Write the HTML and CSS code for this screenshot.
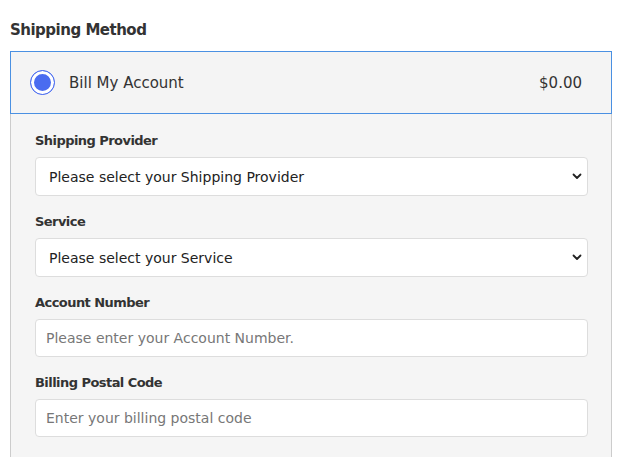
FILE: index.html
```html
<!DOCTYPE html>
<html>
    <head>
        <title>Shipping Method</title>
        <meta name="viewport" content="width=device-width, user-scalable=no">
        <link rel="stylesheet" href="styles.css">
    </head>
    <body>
        <h2 class="section_title">Shipping Method</h2>
        <div class="method_box">
            <label class="method_head">
                <span class="radio_dot"></span>
                <span class="method_name">Bill My Account</span>
                <span class="method_price">$0.00</span>
            </label>
            <div class="method_body">
                <div class="field">
                    <label class="field_label">Shipping Provider</label>
                    <div class="select_wrap">
                        <select class="field_select">
                            <option>Please select your Shipping Provider</option>
                        </select>
                        <svg class="chevron" width="10" height="7" viewBox="0 0 10 7"><path d="M1.5 1.5 L5 5 L8.5 1.5" fill="none" stroke="#222" stroke-width="1.8" stroke-linecap="round" stroke-linejoin="round"/></svg>
                    </div>
                </div>
                <div class="field">
                    <label class="field_label">Service</label>
                    <div class="select_wrap">
                        <select class="field_select">
                            <option>Please select your Service</option>
                        </select>
                        <svg class="chevron" width="10" height="7" viewBox="0 0 10 7"><path d="M1.5 1.5 L5 5 L8.5 1.5" fill="none" stroke="#222" stroke-width="1.8" stroke-linecap="round" stroke-linejoin="round"/></svg>
                    </div>
                </div>
                <div class="field">
                    <label class="field_label">Account Number</label>
                    <input class="field_input" type="text" placeholder="Please enter your Account Number.">
                </div>
                <div class="field">
                    <label class="field_label">Billing Postal Code</label>
                    <input class="field_input" type="text" placeholder="Enter your billing postal code">
                </div>
            </div>
        </div>
    </body>
</html>
```

FILE: styles.css
```css
body {
	margin: 0;
	padding: 20px 8px 0 10px;
	font-family: "DejaVu Sans", "Open Sans", sans-serif;
	color: #333;
	background: #fff;
}
.section_title {
	font-size: 15px;
	line-height: 20px;
	font-weight: bold;
	letter-spacing: -0.5px;
	margin: 0 0 11px 0;
	color: #333;
}
.method_box {
	width: 602px;
}
.method_head {
	display: flex;
	align-items: center;
	height: 61px;
	padding: 0 29px 0 19px;
	border: 1px solid #4a90e2;
	background: #f4f4f4;
	font-size: 15px;
}
.radio_dot {
	width: 23px;
	height: 23px;
	border-radius: 50%;
	border: 1px solid #4a6cf0;
	background: #4a6cf0;
	box-shadow: inset 0 0 0 3px #fff;
	margin-right: 14px;
}
.method_name {
	flex: 1;
}
.method_body {
	display: flex;
	flex-direction: column;
	gap: 18px;
	padding: 19px 23px 20px 24px;
	border-left: 1px solid #ccc;
	border-right: 1px solid #ccc;
	background: #f5f5f5;
}
.field {
	display: flex;
	flex-direction: column;
	gap: 8px;
}
.field_label {
	font-size: 13px;
	line-height: 16px;
	font-weight: bold;
	letter-spacing: -0.55px;
	color: #333;
}
.select_wrap {
	position: relative;
}
.field_select {
	appearance: none;
	width: 100%;
	height: 39px;
	padding: 0 30px 0 13px;
	border: 1px solid #ddd;
	border-radius: 4px;
	background: #fff;
	font-family: inherit;
	font-size: 14px;
	color: #222;
}
.chevron {
	position: absolute;
	right: 6px;
	top: 16px;
}
.field_input {
	height: 38px;
	padding: 0 10px;
	border: 1px solid #ddd;
	border-radius: 4px;
	background: #fff;
	font-family: inherit;
	font-size: 14px;
	box-sizing: border-box;
}
.field_input::placeholder {
	color: #777;
}
```
